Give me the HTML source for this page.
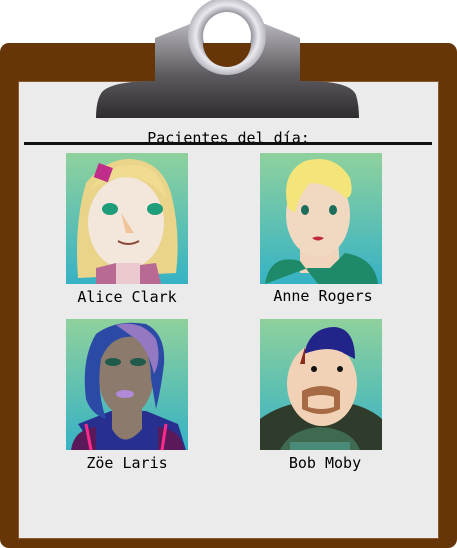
<!DOCTYPE html>
<html><head><style>
html,body{margin:0;padding:0;background:#fff;width:457px;height:548px;overflow:hidden;position:relative;font-family:"DejaVu Sans Mono","Liberation Mono",monospace}
.board{position:absolute;left:0;top:43px;width:457px;height:505px;background:#663508;border-radius:9px}
.paper{position:absolute;left:18px;top:81px;width:421px;height:458px;background:#ebebeb;border:1px solid #8a5a2a;box-sizing:border-box}
.title{position:absolute;left:0;width:457px;top:129px;text-align:center;font-size:15px;color:#000}
.line{position:absolute;left:24px;top:142px;width:408px;height:3px;background:#111}
.n{position:absolute;width:160px;text-align:center;font-size:15px;color:#000}
</style></head><body>
<div class="board"></div>
<div class="paper"></div>
<svg style="position:absolute;left:0;top:0" width="457" height="125">
<defs>
<linearGradient id="cg" x1="0" y1="0" x2="0" y2="1"><stop offset="0" stop-color="#b9b7bd"/><stop offset="0.55" stop-color="#5e5b60"/><stop offset="1" stop-color="#2f2c30"/></linearGradient>
<radialGradient id="rg" cx="0.5" cy="0.5" r="0.5"><stop offset="0.6" stop-color="#8e8c95"/><stop offset="0.8" stop-color="#e9e9ee"/><stop offset="1" stop-color="#b7b6be"/></radialGradient>
</defs>
<path d="M155 38 Q175 30 195 22 L260 22 Q280 30 300 38 L300 81 Q350 80 356 95 Q359 105 359 118 L96 118 Q96 100 102 92 Q112 81 155 81 Z" fill="url(#cg)"/>
<circle cx="227" cy="36" r="39" fill="url(#rg)"/>
<circle cx="227" cy="36" r="24" fill="#fff"/>
<path d="M203 43 A24 24 0 0 0 251 43 Z" fill="#663508"/>
</svg>
<div class="title">Pacientes del día:</div>
<div class="line"></div>
<svg style="position:absolute;left:0;top:0" width="457" height="548">
<defs><linearGradient id="bg" x1="0" y1="0" x2="0" y2="1"><stop offset="0" stop-color="#8fd19c"/><stop offset="1" stop-color="#36b2c5"/></linearGradient></defs>
<g transform="translate(66,153)">
<rect width="122" height="131" fill="url(#bg)"/>
<path d="M12 125 Q8 70 20 30 Q40 5 65 6 Q95 8 105 40 Q115 80 110 120 Z" fill="#e9d48a"/>
<ellipse cx="60" cy="70" rx="38" ry="46" fill="#f3e6da"/>
<path d="M22 40 Q40 10 70 12 Q95 14 100 45 Q80 20 50 25 Q30 30 22 40Z" fill="#f0dc90"/>
<ellipse cx="44" cy="56" rx="8" ry="6" fill="#1e9d7a"/><ellipse cx="89" cy="56" rx="8" ry="6" fill="#1e9d7a"/>
<path d="M55 60 L60 80 L68 80 Z" fill="#f0c39a"/>
<path d="M52 88 Q62 94 73 88" stroke="#8a4a3a" stroke-width="2" fill="none"/>
<rect x="50" y="110" width="24" height="21" fill="#eac9cf"/>
<path d="M30 131 L30 115 L50 110 L50 131Z M74 131 L74 112 L90 110 L95 131Z" fill="#b86a94"/>
<rect x="30" y="12" width="15" height="15" fill="#c02e8a" transform="rotate(20 37 19)"/>
</g>
<g transform="translate(260,153)">
<rect width="122" height="131" fill="url(#bg)"/>
<path d="M40 80 L40 120 L80 120 L78 80Z" fill="#f0d4bc"/>
<ellipse cx="58" cy="62" rx="32" ry="42" fill="#f1d8c0"/>
<path d="M28 55 Q20 20 45 8 Q75 0 90 25 Q95 45 85 45 Q70 30 50 30 Q40 40 35 60Z" fill="#f3e57a"/>
<ellipse cx="45" cy="57" rx="4" ry="5" fill="#1e6d5a"/><ellipse cx="73" cy="57" rx="4" ry="5" fill="#1e6d5a"/>
<path d="M52 85 Q58 82 64 85 Q58 90 52 85Z" fill="#c02a3a"/>
<path d="M5 131 Q10 100 40 108 L58 131 L118 131 Q115 105 85 100 L70 115 L48 115Z" fill="#1e8a6a"/>
</g>
<g transform="translate(66,319)">
<rect width="122" height="131" fill="url(#bg)"/>
<path d="M30 131 L12 105 L45 92 L80 92 L112 105 L120 131Z" fill="#27308f"/>
<path d="M5 131 Q8 110 30 108 L30 131Z M92 108 Q115 110 118 131 L92 131Z" fill="#5a1a5a"/>
<path d="M25 131 L20 105 M100 105 L96 131" stroke="#ff2a8a" stroke-width="3"/>
<path d="M46 92 L46 110 Q58 131 76 110 L76 90Z" fill="#8c7a6c"/>
<ellipse cx="60" cy="55" rx="28" ry="42" fill="#8c7a6c"/>
<path d="M20 80 Q15 40 30 15 Q50 0 80 5 Q100 15 98 45 Q95 70 90 90 L85 60 Q85 30 70 18 Q45 15 35 40 Q30 70 40 100 Q25 95 20 80Z" fill="#2a4aa6"/>
<path d="M50 6 Q75 0 90 20 Q96 40 88 55 Q82 30 70 20Z" fill="#9478c2"/>
<ellipse cx="47" cy="43" rx="8" ry="4" fill="#1f5a4a"/><ellipse cx="72" cy="43" rx="8" ry="4" fill="#1f5a4a"/>
<ellipse cx="59" cy="75" rx="9" ry="4" fill="#b08ad8"/>
</g>
<g transform="translate(260,319)">
<rect width="122" height="131" fill="url(#bg)"/>
<path d="M0 131 L0 100 Q20 85 50 82 L75 82 Q105 85 122 100 L122 131Z" fill="#2f3b2b"/>
<path d="M20 131 Q30 110 60 108 Q92 110 100 131Z" fill="#3f6a50"/>
<rect x="30" y="123" width="60" height="8" fill="#4a8a78"/>
<ellipse cx="62" cy="65" rx="35" ry="42" fill="#f1d2b6"/>
<path d="M42 72 Q62 62 80 72 L80 90 Q62 100 42 90Z" fill="#a66a44"/>
<path d="M48 78 Q62 74 74 78 L74 88 Q62 92 48 88Z" fill="#f1d2b6"/>
<path d="M44 35 Q50 8 75 8 Q95 10 95 40 L85 35 Q70 25 44 35Z" fill="#22248a"/>
<path d="M45 28 L40 45 L45 45Z" fill="#8a2a1a"/>
<ellipse cx="54" cy="50" rx="3" ry="3" fill="#111"/><ellipse cx="80" cy="50" rx="3" ry="3" fill="#111"/>
</g>
</svg>
<div class="n" style="left:47px;top:288px">Alice Clark</div>
<div class="n" style="left:243px;top:287px">Anne Rogers</div>
<div class="n" style="left:47px;top:454px">Zöe Laris</div>
<div class="n" style="left:245px;top:454px">Bob Moby</div>
</body></html>
